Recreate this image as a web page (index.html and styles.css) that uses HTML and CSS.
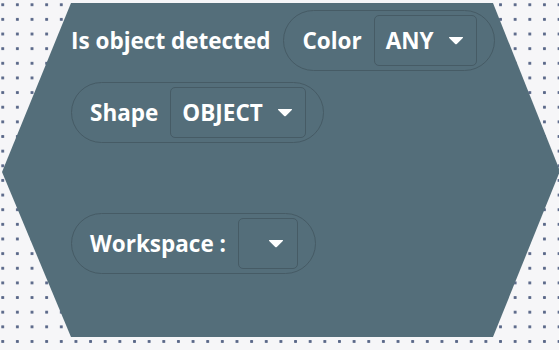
FILE: index.html
```html
<html>
	<head>
		<title>Is object detected</title>
		<link rel="stylesheet" href="styles.css">
	</head>
	<body>
		<div class="workspace">
			<div class="block">
				<div class="row">
					<span class="label">Is object detected</span>
					<div class="pill">
						<span class="label">Color</span>
						<div class="dropdown">
							<span class="value">ANY</span>
							<svg class="arrow" width="16" height="9" viewBox="0 0 16 9"><path d="M1.5 1 H14.5 Q15.6 1 14.8 1.9 L8.8 7.9 Q8 8.6 7.2 7.9 L1.2 1.9 Q0.4 1 1.5 1 Z" fill="#fff"/></svg>
						</div>
					</div>
				</div>

				<div class="row">
					<div class="pill">
						<span class="label">Shape</span>
						<div class="dropdown">
							<span class="value">OBJECT</span>
							<svg class="arrow" width="16" height="9" viewBox="0 0 16 9"><path d="M1.5 1 H14.5 Q15.6 1 14.8 1.9 L8.8 7.9 Q8 8.6 7.2 7.9 L1.2 1.9 Q0.4 1 1.5 1 Z" fill="#fff"/></svg>
						</div>
					</div>
				</div>

				<div class="row row-last">
					<div class="pill">
						<span class="label">Workspace :</span>
						<div class="dropdown dropdown-empty">
							<svg class="arrow" width="16" height="9" viewBox="0 0 16 9"><path d="M1.5 1 H14.5 Q15.6 1 14.8 1.9 L8.8 7.9 Q8 8.6 7.2 7.9 L1.2 1.9 Q0.4 1 1.5 1 Z" fill="#fff"/></svg>
						</div>
					</div>
				</div>
			</div>
		</div>
	</body>
</html>
```

FILE: styles.css
```css
body{
	margin:0;
	font-family:"Open Sans", "DejaVu Sans", sans-serif;
}

.workspace{
	width:559px;
	height:350px;
	overflow:hidden;
	background-color:#f6f6f8;
	background-image:radial-gradient(circle, #5a6889 1.3px, transparent 1.9px);
	background-size:14.65px 14.65px;
	background-position:-4.6px -2.6px;
	padding:3px 0 0 2px;
	box-sizing:border-box;
}

.block{
	width:560px;
	height:334px;
	box-sizing:border-box;
	background:#546e7a;
	clip-path:polygon(69px 0, 491px 0, 558px 168px, 491px 334px, 69px 334px, 0 169px);
	padding:7px 0 0 69px;
	display:flex;
	flex-direction:column;
	gap:11px;
}

.row{
	display:flex;
	align-items:center;
	gap:13px;
}

.row-last{
	margin-top:59px;
}

.label,
.value{
	color:#fff;
	font-weight:700;
	font-size:22.5px;
	white-space:nowrap;
}

.pill{
	display:flex;
	align-items:center;
	gap:12px;
	height:61px;
	box-sizing:border-box;
	border:1px solid #465b65;
	border-radius:31px;
	padding:0 17px 0 18px;
}

.dropdown{
	display:flex;
	align-items:center;
	gap:14px;
	height:51px;
	box-sizing:border-box;
	border:1px solid #465b65;
	border-radius:5px;
	padding:0 12px 0 11px;
}

.dropdown-empty{
	width:60px;
	justify-content:flex-end;
	padding-right:13px;
}

.arrow{
	display:block;
}
```
